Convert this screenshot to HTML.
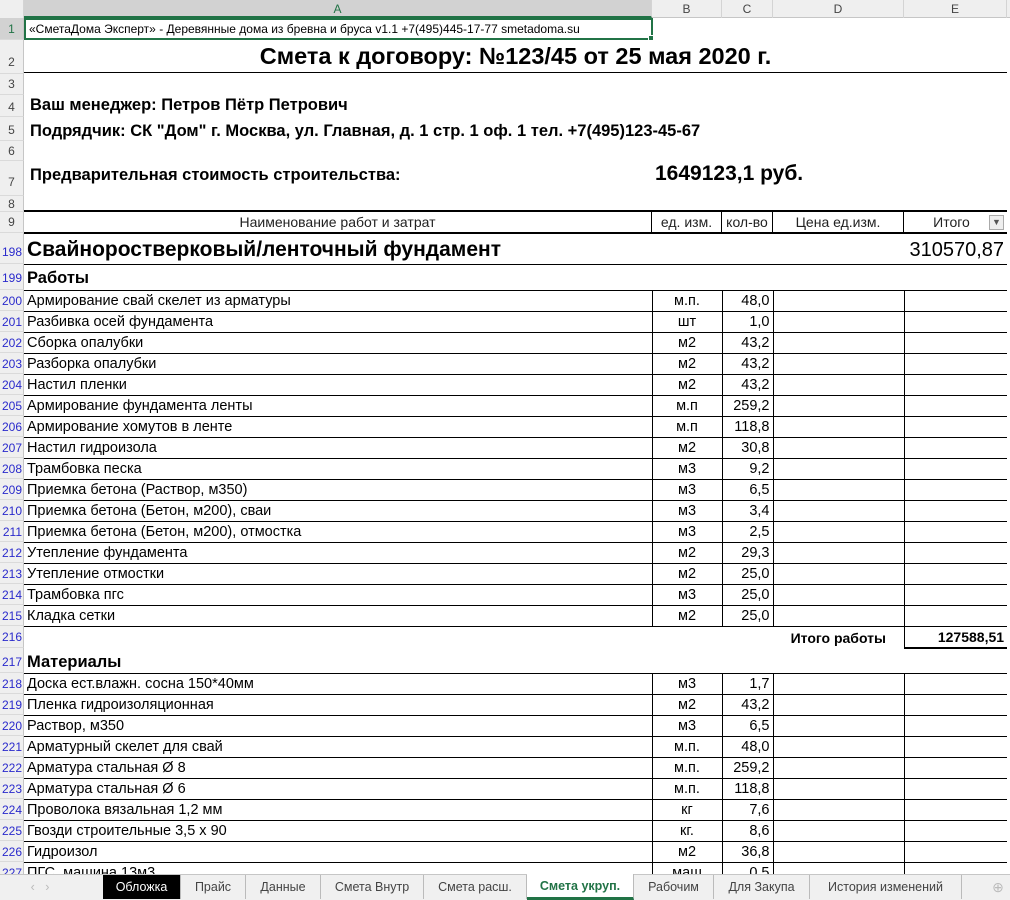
<!DOCTYPE html>
<html><head><meta charset="utf-8"><style>
*{margin:0;padding:0;box-sizing:border-box}
body{width:1010px;height:900px;overflow:hidden;background:#fff;font-family:"Liberation Sans",sans-serif;position:relative}
.hdr{position:absolute;top:0;left:0;width:1010px;height:18px;background:#efefef;border-bottom:1px solid #c6c6c6;font-size:12px;color:#444}
.hdr div{position:absolute;top:0;height:18px;line-height:18px;text-align:center;border-right:1px solid #d4d4d4}
.rn{position:absolute;left:0;width:24px;background:#efefef;border-right:1px solid #c6c6c6;border-bottom:1px solid #dadada;font-size:12px;text-align:center;color:#444}
.rn.b{color:#2a2acc;font-size:12px;text-align:right;padding-right:1px}
table{position:absolute;left:24px;top:233px;border-collapse:collapse;table-layout:fixed;width:983px}
td{font-size:14.5px;padding:0 3px;white-space:nowrap;overflow:hidden;border:1px solid #000;vertical-align:bottom;height:21px;line-height:19px}
td.c{text-align:center}td.r{text-align:right}
.t{position:absolute;white-space:nowrap;font-weight:bold;color:#000}
.tabs{position:absolute;left:0;top:874px;width:1010px;height:26px;background:#f0f0f0;border-top:1px solid #c6c6c6;font-size:12.5px}
.tabs span{position:absolute;top:0;height:24px;line-height:24px;text-align:center;color:#444;border-right:1px solid #bbb}
.h9{position:absolute;text-align:center;line-height:21px;border-right:1px solid #000;height:21px;font-size:14px}
</style></head><body>
<div class="hdr">
<div style="left:0;width:24px;background:#efefef"></div>
<div style="left:24px;width:628px;background:#d2d2d2;color:#217346;border-bottom:2px solid #217346">A</div>
<div style="left:652px;width:70px">B</div>
<div style="left:722px;width:51px">C</div>
<div style="left:773px;width:131px">D</div>
<div style="left:904px;width:103px">E</div>
</div>
<div class="rn" style="top:18px;height:22px;line-height:22px;background:#d2d2d2;color:#217346">1</div>
<div class="rn" style="top:40px;height:34px;line-height:44px">2</div>
<div class="rn" style="top:74px;height:21px;line-height:21px">3</div>
<div class="rn" style="top:95px;height:22px;line-height:24px">4</div>
<div class="rn" style="top:117px;height:24px;line-height:26px">5</div>
<div class="rn" style="top:141px;height:20px;line-height:20px">6</div>
<div class="rn" style="top:161px;height:35px;line-height:42px">7</div>
<div class="rn" style="top:196px;height:16px;line-height:16px">8</div>
<div class="rn" style="top:212px;height:21px;line-height:21px">9</div>
<div style="position:absolute;left:24px;top:18px;width:629px;height:22px;border:2px solid #217346;font-size:12px;line-height:18px;padding-left:3px;white-space:nowrap">«СметаДома Эксперт» - Деревянные дома из бревна и бруса v1.1 +7(495)445-17-77 smetadoma.su</div>
<div style="position:absolute;left:648px;top:35px;width:6px;height:6px;background:#217346;border:1px solid #fff"></div>
<div class="t" style="left:24px;width:983px;top:43px;font-size:23.5px;text-align:center">Смета к договору: №123/45 от 25 мая 2020 г.</div>
<div style="position:absolute;left:24px;top:72px;width:983px;height:1px;background:#000"></div>
<div class="t" style="left:30px;top:96px;font-size:16.5px">Ваш менеджер: Петров Пётр Петрович</div>
<div class="t" style="left:30px;top:122px;font-size:16.5px">Подрядчик: СК "Дом" г. Москва, ул. Главная, д. 1 стр. 1 оф. 1 тел. +7(495)123-45-67</div>
<div class="t" style="left:30px;top:166px;font-size:16.5px">Предварительная стоимость строительства:</div>
<div class="t" style="left:655px;top:162px;font-size:21px">1649123,1 руб.</div>
<div style="position:absolute;left:24px;top:210px;width:983px;height:2px;background:#000"></div>
<div style="position:absolute;left:24px;top:212px;width:983px;height:21px;color:#222">
<div class="h9" style="left:0;width:628px">Наименование работ и затрат</div>
<div class="h9" style="left:628px;width:70px">ед. изм.</div>
<div class="h9" style="left:698px;width:51px">кол-во</div>
<div class="h9" style="left:749px;width:131px">Цена ед.изм.</div>
<div class="h9" style="left:880px;width:103px;border:0;padding-right:8px">Итого</div>
<div style="position:absolute;left:965px;top:3px;width:15px;height:15px;border:1px solid #aaa;background:#eee;font-size:9px;line-height:13px;text-align:center;color:#555">▼</div>
</div>
<div style="position:absolute;left:24px;top:232px;width:983px;height:2px;background:#000"></div>

<table>
<colgroup><col style="width:628px"><col style="width:70px"><col style="width:51px"><col style="width:131px"><col style="width:103px"></colgroup>
<tr><td colspan="4" style="border-left:0;border-right:0;border-top:0;height:31px;font-size:21px;font-weight:bold;line-height:28px">Свайноростверковый/ленточный фундамент</td><td class="r" style="border-right:0;border-left:0;border-top:0;font-size:20px;line-height:28px">310570,87</td></tr>
<tr><td colspan="5" style="border-left:0;border-right:0;height:26px;font-size:16.5px;font-weight:bold;line-height:23px">Работы</td></tr>
<tr><td style="border-left:0">Армирование свай скелет из арматуры</td><td class="c">м.п.</td><td class="r">48,0</td><td></td><td style="border-right:0"></td></tr>
<tr><td style="border-left:0">Разбивка осей фундамента</td><td class="c">шт</td><td class="r">1,0</td><td></td><td style="border-right:0"></td></tr>
<tr><td style="border-left:0">Сборка опалубки</td><td class="c">м2</td><td class="r">43,2</td><td></td><td style="border-right:0"></td></tr>
<tr><td style="border-left:0">Разборка опалубки</td><td class="c">м2</td><td class="r">43,2</td><td></td><td style="border-right:0"></td></tr>
<tr><td style="border-left:0">Настил пленки</td><td class="c">м2</td><td class="r">43,2</td><td></td><td style="border-right:0"></td></tr>
<tr><td style="border-left:0">Армирование фундамента ленты</td><td class="c">м.п</td><td class="r">259,2</td><td></td><td style="border-right:0"></td></tr>
<tr><td style="border-left:0">Армирование хомутов в ленте</td><td class="c">м.п</td><td class="r">118,8</td><td></td><td style="border-right:0"></td></tr>
<tr><td style="border-left:0">Настил гидроизола</td><td class="c">м2</td><td class="r">30,8</td><td></td><td style="border-right:0"></td></tr>
<tr><td style="border-left:0">Трамбовка песка</td><td class="c">м3</td><td class="r">9,2</td><td></td><td style="border-right:0"></td></tr>
<tr><td style="border-left:0">Приемка бетона (Раствор, м350)</td><td class="c">м3</td><td class="r">6,5</td><td></td><td style="border-right:0"></td></tr>
<tr><td style="border-left:0">Приемка бетона (Бетон, м200), сваи</td><td class="c">м3</td><td class="r">3,4</td><td></td><td style="border-right:0"></td></tr>
<tr><td style="border-left:0">Приемка бетона (Бетон, м200), отмостка</td><td class="c">м3</td><td class="r">2,5</td><td></td><td style="border-right:0"></td></tr>
<tr><td style="border-left:0">Утепление фундамента</td><td class="c">м2</td><td class="r">29,3</td><td></td><td style="border-right:0"></td></tr>
<tr><td style="border-left:0">Утепление отмостки</td><td class="c">м2</td><td class="r">25,0</td><td></td><td style="border-right:0"></td></tr>
<tr><td style="border-left:0">Трамбовка пгс</td><td class="c">м3</td><td class="r">25,0</td><td></td><td style="border-right:0"></td></tr>
<tr><td style="border-left:0">Кладка сетки</td><td class="c">м2</td><td class="r">25,0</td><td></td><td style="border-right:0"></td></tr>
<tr><td style="border:0;border-top:1px solid #000;height:22px"></td><td style="border:0;border-top:1px solid #000"></td><td style="border:0;border-top:1px solid #000"></td><td class="c" style="border:0;border-top:1px solid #000;font-weight:bold;font-size:14px">Итого работы</td><td class="r" style="border-left:1px solid #000;border-right:0;border-bottom:2px solid #000;font-weight:bold;font-size:14px">127588,51</td></tr>
<tr><td colspan="5" style="border-left:0;border-right:0;border-top:0;height:25px;font-size:16.5px;font-weight:bold;line-height:22px">Материалы</td></tr>
<tr><td style="border-left:0">Доска ест.влажн. сосна 150*40мм</td><td class="c">м3</td><td class="r">1,7</td><td></td><td style="border-right:0"></td></tr>
<tr><td style="border-left:0">Пленка гидроизоляционная</td><td class="c">м2</td><td class="r">43,2</td><td></td><td style="border-right:0"></td></tr>
<tr><td style="border-left:0">Раствор, м350</td><td class="c">м3</td><td class="r">6,5</td><td></td><td style="border-right:0"></td></tr>
<tr><td style="border-left:0">Арматурный скелет для свай</td><td class="c">м.п.</td><td class="r">48,0</td><td></td><td style="border-right:0"></td></tr>
<tr><td style="border-left:0">Арматура стальная Ø 8</td><td class="c">м.п.</td><td class="r">259,2</td><td></td><td style="border-right:0"></td></tr>
<tr><td style="border-left:0">Арматура стальная Ø 6</td><td class="c">м.п.</td><td class="r">118,8</td><td></td><td style="border-right:0"></td></tr>
<tr><td style="border-left:0">Проволока вязальная 1,2 мм</td><td class="c">кг</td><td class="r">7,6</td><td></td><td style="border-right:0"></td></tr>
<tr><td style="border-left:0">Гвозди строительные 3,5 х 90</td><td class="c">кг.</td><td class="r">8,6</td><td></td><td style="border-right:0"></td></tr>
<tr><td style="border-left:0">Гидроизол</td><td class="c">м2</td><td class="r">36,8</td><td></td><td style="border-right:0"></td></tr>
<tr><td style="border-left:0">ПГС, машина 13м3</td><td class="c">маш</td><td class="r">0,5</td><td></td><td style="border-right:0"></td></tr>
</table>

<div class="rn b" style="top:233px;height:31px;line-height:38px">198</div>
<div class="rn b" style="top:264px;height:26px;line-height:28px">199</div>
<div class="rn b" style="top:290px;height:21px;line-height:22px">200</div>
<div class="rn b" style="top:311px;height:21px;line-height:22px">201</div>
<div class="rn b" style="top:332px;height:21px;line-height:22px">202</div>
<div class="rn b" style="top:353px;height:21px;line-height:22px">203</div>
<div class="rn b" style="top:374px;height:21px;line-height:22px">204</div>
<div class="rn b" style="top:395px;height:21px;line-height:22px">205</div>
<div class="rn b" style="top:416px;height:21px;line-height:22px">206</div>
<div class="rn b" style="top:437px;height:21px;line-height:22px">207</div>
<div class="rn b" style="top:458px;height:21px;line-height:22px">208</div>
<div class="rn b" style="top:479px;height:21px;line-height:22px">209</div>
<div class="rn b" style="top:500px;height:21px;line-height:22px">210</div>
<div class="rn b" style="top:521px;height:21px;line-height:22px">211</div>
<div class="rn b" style="top:542px;height:21px;line-height:22px">212</div>
<div class="rn b" style="top:563px;height:21px;line-height:22px">213</div>
<div class="rn b" style="top:584px;height:21px;line-height:22px">214</div>
<div class="rn b" style="top:605px;height:21px;line-height:22px">215</div>
<div class="rn b" style="top:626px;height:22px;line-height:22px">216</div>
<div class="rn b" style="top:648px;height:25px;line-height:28px">217</div>
<div class="rn b" style="top:673px;height:21px;line-height:22px">218</div>
<div class="rn b" style="top:694px;height:21px;line-height:22px">219</div>
<div class="rn b" style="top:715px;height:21px;line-height:22px">220</div>
<div class="rn b" style="top:736px;height:21px;line-height:22px">221</div>
<div class="rn b" style="top:757px;height:21px;line-height:22px">222</div>
<div class="rn b" style="top:778px;height:21px;line-height:22px">223</div>
<div class="rn b" style="top:799px;height:21px;line-height:22px">224</div>
<div class="rn b" style="top:820px;height:21px;line-height:22px">225</div>
<div class="rn b" style="top:841px;height:21px;line-height:22px">226</div>
<div class="rn b" style="top:862px;height:21px;line-height:22px">227</div>

<div class="tabs">
<span style="left:10px;width:60px;border:0;color:#bbb">‹ &nbsp; ›</span>
<span style="left:103px;width:78px;background:#000;color:#fff">Обложка</span>
<span style="left:181px;width:65px">Прайс</span>
<span style="left:246px;width:75px">Данные</span>
<span style="left:321px;width:103px">Смета Внутр</span>
<span style="left:424px;width:103px">Смета расш.</span>
<span style="left:527px;width:107px;background:#fff;color:#217346;font-weight:bold;border-bottom:3px solid #217346;top:-1px;height:26px">Смета укруп.</span>
<span style="left:634px;width:80px">Рабочим</span>
<span style="left:714px;width:96px">Для Закупа</span>
<span style="left:810px;width:152px">История изменений</span>
<span style="left:990px;width:16px;border:0;color:#bbb;font-size:14px">⊕</span>
</div>
</body></html>
